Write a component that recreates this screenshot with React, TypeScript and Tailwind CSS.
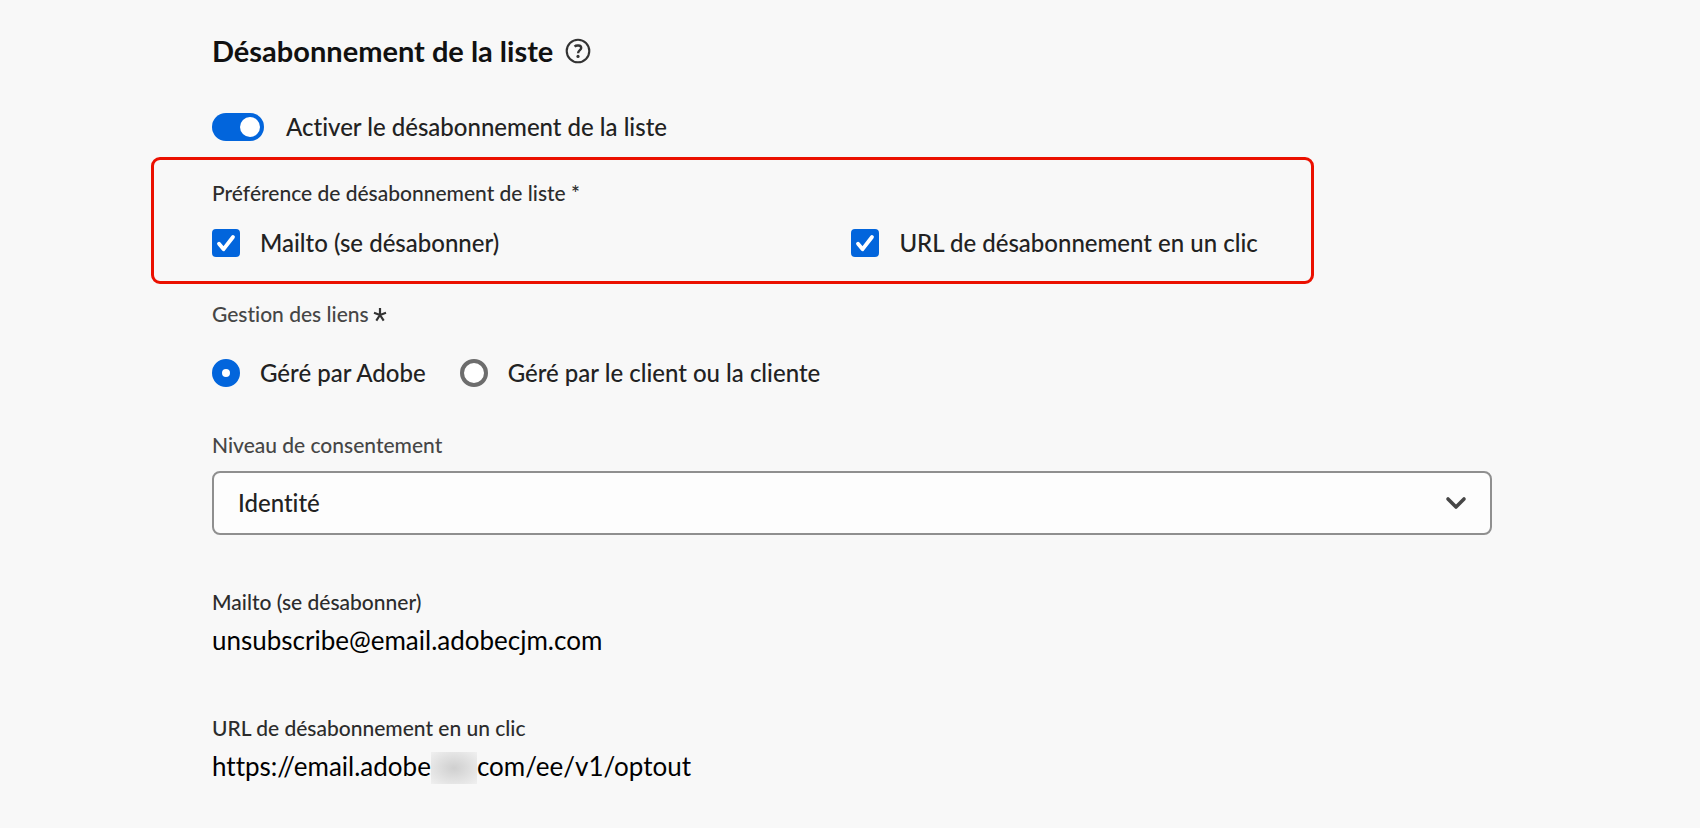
import React from "react";

function CheckOption({ id, label }: { id: string; label: string }) {
  return (
    <div className="flex items-center gap-5">
      <span className="relative flex size-7 shrink-0">
        <input
          id={id}
          type="checkbox"
          defaultChecked
          className="peer size-7 appearance-none rounded-[4px] border-[3px] border-[#6d6d6d] bg-white checked:border-[#0265dc] checked:bg-[#0265dc]"
        />
        <svg
          viewBox="0 0 28 28"
          className="pointer-events-none absolute inset-0 hidden size-7 peer-checked:block"
          fill="none"
          stroke="#fff"
          strokeWidth="3.8"
          strokeLinecap="round"
          strokeLinejoin="round"
          aria-hidden="true"
        >
          <path d="M7 14.8 L11.6 20.2 L21 8" />
        </svg>
      </span>
      <label htmlFor={id} className="text-2xl/7 text-[#222222]">
        {label}
      </label>
    </div>
  );
}

function RadioOption({ id, label, checked }: { id: string; label: string; checked?: boolean }) {
  return (
    <div className="flex items-center gap-5">
      <input
        id={id}
        type="radio"
        name="link-management"
        defaultChecked={checked}
        className="size-7 shrink-0 appearance-none rounded-full border-4 border-[#6d6d6d] bg-white checked:border-10 checked:border-[#0265dc]"
      />
      <label htmlFor={id} className="text-2xl/7 text-[#222222]">
        {label}
      </label>
    </div>
  );
}

export default function App() {
  return (
    <main className="min-h-screen bg-[#f8f8f8] pt-[35px] pr-[208px] pb-8 pl-[151px] font-[Lato,sans-serif] font-medium [font-variant-ligatures:none]">
      <header className="flex items-center gap-3 pl-[61px]">
        <h1 className="text-[29px]/8 font-bold text-[#111111]">Désabonnement de la liste</h1>
        <button type="button" aria-label="Aide" className="flex">
          <svg viewBox="0 0 26 26" className="size-[26px]" fill="none" stroke="#333" aria-hidden="true">
            <circle cx="13" cy="13" r="11.3" strokeWidth="2.1" />
            <path
              d="M9.6 8.6 C11 7.1 16.2 6.8 16.2 9.9 C16.2 12.2 13.1 12.2 13.1 15.2"
              strokeWidth="2.4"
            />
            <circle cx="13" cy="18.4" r="1.6" fill="#333" stroke="none" />
          </svg>
        </button>
      </header>

      <div className="mt-[46px] flex items-center gap-[22px] pl-[61px]">
        <input
          id="enable"
          type="checkbox"
          role="switch"
          defaultChecked
          className="h-7 w-[52px] shrink-0 appearance-none rounded-full bg-[#6d6d6d] p-1 before:block before:size-5 before:rounded-full before:bg-white checked:bg-[#0265dc] checked:before:ml-6"
        />
        <label htmlFor="enable" className="text-2xl/7 text-[#222222]">
          Activer le désabonnement de la liste
        </label>
      </div>

      <section
        role="group"
        aria-labelledby="preference"
        className="mt-4 mr-[178px] rounded-[9px] border-[3px] border-[#eb1000] pt-[21px] pb-6 pl-[58px]"
      >
        <h2 id="preference" className="text-[21px]/6 text-[#2c2c2c]">
          Préférence de désabonnement de liste *
        </h2>
        <div className="mt-6 grid grid-cols-[32fr_23fr]">
          <CheckOption id="mailto" label="Mailto (se désabonner)" />
          <CheckOption id="one-click" label="URL de désabonnement en un clic" />
        </div>
      </section>

      <div className="pl-[61px]">
        <section role="radiogroup" aria-labelledby="links" className="mt-[18px]">
          <h2 id="links" className="flex gap-1 text-[21px]/6 text-[#464646]">
            Gestion des liens
            <svg viewBox="0 0 14 24" className="h-6 w-[14px]" stroke="#333" strokeWidth="2.2" role="img" aria-label="obligatoire">
              <path d="M7 13 V6 M7 13 L1 10.8 M7 13 L13 10.8 M7 13 L3.3 18.6 M7 13 L10.7 18.6" />
            </svg>
          </h2>
          <div className="mt-[33px] flex gap-[34px]">
            <RadioOption id="adobe" label="Géré par Adobe" checked />
            <RadioOption id="client" label="Géré par le client ou la cliente" />
          </div>
        </section>

        <div className="mt-[46px]">
          <label htmlFor="consent" className="block text-[21px]/6 text-[#464646]">
            Niveau de consentement
          </label>
          <div className="relative mt-[14px]">
            <select
              id="consent"
              className="block h-16 w-full appearance-none rounded-lg border-2 border-[#8f8f8f] bg-[#fdfdfd] pr-14 pl-6 text-2xl/7 text-[#222222]"
            >
              <option>Identité</option>
            </select>
            <svg
              viewBox="0 0 22 14"
              className="pointer-events-none absolute top-[25px] right-[25px] h-[14px] w-[22px]"
              fill="none"
              stroke="#464646"
              strokeWidth="3.6"
              strokeLinecap="round"
              strokeLinejoin="round"
              aria-hidden="true"
            >
              <path d="M3 3 L11 11 L19 3" />
            </svg>
          </div>
        </div>

        <dl className="mt-[55px]">
          <dt className="text-[21px]/6 text-[#2c2c2c]">Mailto (se désabonner)</dt>
          <dd className="mt-2 text-[26px]/9 font-normal text-black">unsubscribe@email.adobecjm.com</dd>
          <dt className="mt-[58px] text-[21px]/6 text-[#2c2c2c]">URL de désabonnement en un clic</dt>
          <dd className="mt-2 flex items-end text-[26px]/9 font-normal text-black">
            https://email.adobe
            <span className="h-8 w-[46px] bg-radial from-[#cfcfcf] to-[#f0f0f0]" />
            com/ee/v1/optout
          </dd>
        </dl>
      </div>
    </main>
  );
}
